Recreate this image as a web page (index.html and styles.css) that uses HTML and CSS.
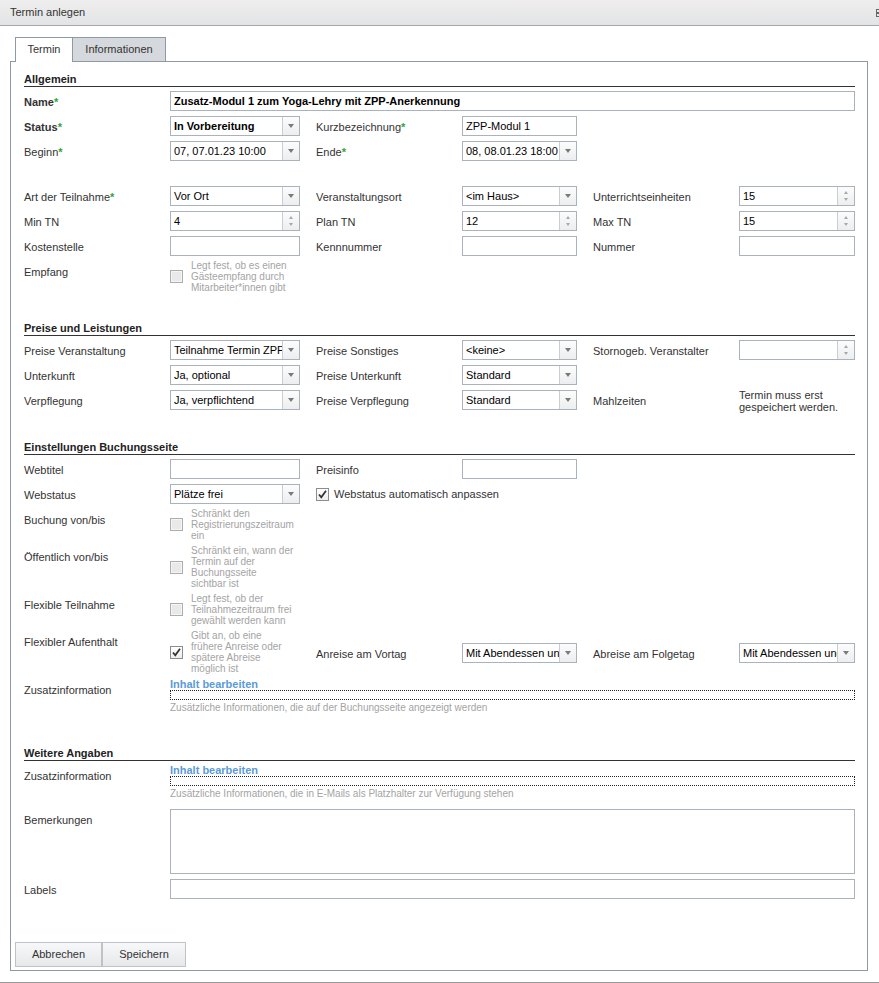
FILE: index.html
```html
<!DOCTYPE html>
<html lang="de">
<head>
<meta charset="utf-8">
<title>Termin anlegen</title>
<link rel="stylesheet" href="styles.css">
</head>
<body>
<div class="titlebar">
  <span class="title">Termin anlegen</span>
  <svg class="tb-icon" width="8" height="10" viewBox="0 0 8 10"><rect x="0.5" y="1.5" width="4" height="3" fill="none" stroke="#666"/><rect x="0.5" y="5.5" width="4" height="3" fill="none" stroke="#666"/></svg>
</div>

<div class="tabs">
  <div class="tab tab-active">Termin</div>
  <div class="tab tab-inactive">Informationen</div>
</div>

<div class="panel">
  <div class="content">

    <div class="section">
      <div class="section-head">Allgemein</div>
      <div class="grid">
        <div class="lbl bold">Name<span class="req">*</span></div>
        <div class="field span5"><span class="val bold">Zusatz-Modul 1 zum Yoga-Lehry mit ZPP-Anerkennung</span></div>

        <div class="lbl bold">Status<span class="req">*</span></div>
        <div class="field"><span class="val bold">In Vorbereitung</span><span class="trigger"><i class="arrow"></i></span></div>
        <div class="lbl lbl-pad">Kurzbezeichnung<span class="req">*</span></div>
        <div class="field"><span class="val">ZPP-Modul 1</span></div>
        <div></div><div></div>

        <div class="lbl">Beginn<span class="req">*</span></div>
        <div class="field"><span class="val">07, 07.01.23 10:00</span><span class="trigger"><i class="arrow"></i></span></div>
        <div class="lbl lbl-pad">Ende<span class="req">*</span></div>
        <div class="field"><span class="val">08, 08.01.23 18:00</span><span class="trigger"><i class="arrow"></i></span></div>
        <div></div><div></div>

        <div class="spacer"></div>

        <div class="lbl">Art der Teilnahme<span class="req">*</span></div>
        <div class="field"><span class="val">Vor Ort</span><span class="trigger"><i class="arrow"></i></span></div>
        <div class="lbl lbl-pad">Veranstaltungsort</div>
        <div class="field"><span class="val">&lt;im Haus&gt;</span><span class="trigger"><i class="arrow"></i></span></div>
        <div class="lbl lbl-pad">Unterrichtseinheiten</div>
        <div class="field"><span class="val">15</span><span class="spin"><i class="up"></i><i class="down"></i></span></div>

        <div class="lbl">Min TN</div>
        <div class="field"><span class="val">4</span><span class="spin"><i class="up"></i><i class="down"></i></span></div>
        <div class="lbl lbl-pad">Plan TN</div>
        <div class="field"><span class="val">12</span><span class="spin"><i class="up"></i><i class="down"></i></span></div>
        <div class="lbl lbl-pad">Max TN</div>
        <div class="field"><span class="val">15</span><span class="spin"><i class="up"></i><i class="down"></i></span></div>

        <div class="lbl">Kostenstelle</div>
        <div class="field"></div>
        <div class="lbl lbl-pad">Kennnummer</div>
        <div class="field"></div>
        <div class="lbl lbl-pad">Nummer</div>
        <div class="field"></div>

        <div class="lbl">Empfang</div>
        <div class="cbrow"><span class="cb cb-disabled"></span><span class="help">Legt fest, ob es einen<br>Gästeempfang durch<br>Mitarbeiter*innen gibt</span></div>
        <div></div><div></div><div></div><div></div>
      </div>
    </div>

    <div class="section s2">
      <div class="section-head">Preise und Leistungen</div>
      <div class="grid">
        <div class="lbl">Preise Veranstaltung</div>
        <div class="field"><span class="val">Teilnahme Termin ZPP</span><span class="trigger"><i class="arrow"></i></span></div>
        <div class="lbl lbl-pad">Preise Sonstiges</div>
        <div class="field"><span class="val">&lt;keine&gt;</span><span class="trigger"><i class="arrow"></i></span></div>
        <div class="lbl lbl-pad">Stornogeb. Veranstalter</div>
        <div class="field"><span class="val"></span><span class="spin"><i class="up"></i><i class="down"></i></span></div>

        <div class="lbl">Unterkunft</div>
        <div class="field"><span class="val">Ja, optional</span><span class="trigger"><i class="arrow"></i></span></div>
        <div class="lbl lbl-pad">Preise Unterkunft</div>
        <div class="field"><span class="val">Standard</span><span class="trigger"><i class="arrow"></i></span></div>
        <div></div><div></div>

        <div class="lbl">Verpflegung</div>
        <div class="field"><span class="val">Ja, verpflichtend</span><span class="trigger"><i class="arrow"></i></span></div>
        <div class="lbl lbl-pad">Preise Verpflegung</div>
        <div class="field"><span class="val">Standard</span><span class="trigger"><i class="arrow"></i></span></div>
        <div class="lbl lbl-pad">Mahlzeiten</div>
        <div class="note">Termin muss erst<br>gespeichert werden.</div>
      </div>
    </div>

    <div class="section s3">
      <div class="section-head">Einstellungen Buchungsseite</div>
      <div class="grid">
        <div class="lbl">Webtitel</div>
        <div class="field"></div>
        <div class="lbl lbl-pad">Preisinfo</div>
        <div class="field"></div>
        <div></div><div></div>

        <div class="lbl">Webstatus</div>
        <div class="field"><span class="val">Plätze frei</span><span class="trigger"><i class="arrow"></i></span></div>
        <div class="cbline span4"><span class="cb cb-checked"><svg width="11" height="11" viewBox="0 0 11 11"><path d="M2 5.5 L4.3 8.3 L9 1.8" fill="none" stroke="#333" stroke-width="1.8"/></svg></span><span>Webstatus automatisch anpassen</span></div>

        <div class="lbl">Buchung von/bis</div>
        <div class="cbrow"><span class="cb cb-disabled"></span><span class="help">Schränkt den<br>Registrierungszeitraum<br>ein</span></div>
        <div></div><div></div><div></div><div></div>

        <div class="lbl">Öffentlich von/bis</div>
        <div class="cbrow"><span class="cb cb-disabled"></span><span class="help">Schränkt ein, wann der<br>Termin auf der<br>Buchungsseite<br>sichtbar ist</span></div>
        <div></div><div></div><div></div><div></div>

        <div class="lbl">Flexible Teilnahme</div>
        <div class="cbrow"><span class="cb cb-disabled"></span><span class="help">Legt fest, ob der<br>Teilnahmezeitraum frei<br>gewählt werden kann</span></div>
        <div></div><div></div><div></div><div></div>

        <div class="lbl">Flexibler Aufenthalt</div>
        <div class="cbrow"><span class="cb cb-checked"><svg width="11" height="11" viewBox="0 0 11 11"><path d="M2 5.5 L4.3 8.3 L9 1.8" fill="none" stroke="#333" stroke-width="1.8"/></svg></span><span class="help">Gibt an, ob eine<br>frühere Anreise oder<br>spätere Abreise<br>möglich ist</span></div>
        <div class="lbl lbl-pad mid">Anreise am Vortag</div>
        <div class="field mid"><span class="val">Mit Abendessen und</span><span class="trigger"><i class="arrow"></i></span></div>
        <div class="lbl lbl-pad mid">Abreise am Folgetag</div>
        <div class="field mid"><span class="val">Mit Abendessen und</span><span class="trigger"><i class="arrow"></i></span></div>

        <div class="lbl">Zusatzinformation</div>
        <div class="zusatz span5">
          <div class="inhalt">Inhalt bearbeiten</div>
          <div class="dotted"></div>
          <div class="zhelp">Zusätzliche Informationen, die auf der Buchungsseite angezeigt werden</div>
        </div>
      </div>
    </div>

    <div class="section s4">
      <div class="section-head">Weitere Angaben</div>
      <div class="grid">
        <div class="lbl">Zusatzinformation</div>
        <div class="zusatz span5">
          <div class="inhalt">Inhalt bearbeiten</div>
          <div class="dotted"></div>
          <div class="zhelp">Zusätzliche Informationen, die in E-Mails als Platzhalter zur Verfügung stehen</div>
        </div>

        <div class="lbl">Bemerkungen</div>
        <div class="field textarea span5"></div>

        <div class="lbl">Labels</div>
        <div class="field span5"></div>
      </div>
    </div>

  </div>

  <div class="btnbar">
    <div class="btn btn-cancel">Abbrechen</div>
    <div class="btn btn-save">Speichern</div>
  </div>
</div>

<div class="footer"></div>
</body>
</html>
```

FILE: styles.css
```css
html, body {
  margin: 0;
  padding: 0;
}

body {
  width: 879px;
  height: 983px;
  overflow: hidden;
  background: #fff;
  color: #333;
  font-family: "Liberation Sans", Arial, sans-serif;
  font-size: 11px;
}

/* title bar */
.titlebar {
  height: 25px;
  border-bottom: 1px solid #a4a7ab;
  background: linear-gradient(#eeeeee, #e3e4e5);
  display: flex;
  align-items: center;
  padding-left: 10px;
  overflow: hidden;
}
.title {
  color: #333;
  line-height: 25px;
}
.tb-icon {
  margin-left: auto;
  margin-right: -5px;
  flex: none;
}

/* tabs */
.tabs {
  display: flex;
  align-items: flex-start;
  margin: 11px 0 0 15px;
  height: 24px;
}
.tab {
  box-sizing: border-box;
  height: 24px;
  border: 1px solid #8d99a6;
  border-bottom: none;
  line-height: 23px;
  text-align: center;
  color: #333;
}
.tab-active {
  width: 58px;
  height: 25px;
  background: #fff;
  margin-bottom: -1px;
  position: relative;
  z-index: 1;
}
.tab-inactive {
  width: 93px;
  border-left: none;
  background: #d5d8dc;
}

/* panel */
.panel {
  margin: 0 11px 0 10px;
  border: 1px solid #8d99a6;
  padding: 11px 0 3px 0;
}
.content {
  padding: 0 12px 0 13px;
}

.section-head {
  font-weight: bold;
  color: #222;
  line-height: 13px;
  border-bottom: 1px solid #333;
  margin-bottom: 4px;
}
.s2 { margin-top: 29px; }
.s3 { margin-top: 28px; }
.s4 { margin-top: 29px; }

.grid {
  display: grid;
  grid-template-columns: 146px 130px 162px 115px 162px 116px;
  row-gap: 5px;
  align-items: start;
}
.span5 { grid-column: span 5; }
.span4 { grid-column: span 4; }
.spacer {
  grid-column: 1 / -1;
  height: 15px;
}
.mid { align-self: center; }

.lbl {
  line-height: 22px;
  margin-bottom: -2px;
  white-space: nowrap;
  color: #333;
}
.lbl-pad { padding-left: 16px; }
.bold { font-weight: bold; }
.req {
  color: #2fa52f;
  font-weight: bold;
}

/* fields */
.field {
  box-sizing: border-box;
  height: 20px;
  border: 1px solid #aab2bb;
  background: #fff;
  display: flex;
  overflow: hidden;
}
.val {
  flex: 1;
  min-width: 0;
  padding: 0 3px;
  line-height: 18px;
  color: #000;
  white-space: nowrap;
  overflow: hidden;
}
.trigger,
.spin {
  flex: none;
  width: 16px;
  border-left: 1px solid #c9ced4;
  background: linear-gradient(#fcfcfc, #eceeef);
  display: flex;
  align-items: center;
  justify-content: center;
}
.arrow {
  width: 0;
  height: 0;
  border-left: 3.5px solid transparent;
  border-right: 3.5px solid transparent;
  border-top: 4px solid #7a7a7a;
}
.spin {
  flex-direction: column;
  gap: 4px;
}
.spin .up {
  width: 0;
  height: 0;
  border-left: 2.5px solid transparent;
  border-right: 2.5px solid transparent;
  border-bottom: 3px solid #a8a8a8;
}
.spin .down {
  width: 0;
  height: 0;
  border-left: 2.5px solid transparent;
  border-right: 2.5px solid transparent;
  border-top: 3px solid #a8a8a8;
}
.textarea {
  height: 65px;
}

/* checkboxes */
.cbrow {
  display: flex;
  align-items: center;
  gap: 8px;
  margin-top: -1px;
  white-space: nowrap;
}
.cb {
  flex: none;
  box-sizing: border-box;
  width: 13px;
  height: 13px;
  display: flex;
  align-items: center;
  justify-content: center;
}
.cb-disabled {
  border: 1px solid #adadad;
  background: #e9e9e9;
  box-shadow: inset 0 0 0 1px #f5f5f5;
}
.cb-checked {
  border: 1px solid #8c8c8c;
  background: linear-gradient(#ffffff, #ededed);
}
.help {
  font-size: 10px;
  line-height: 11px;
  color: #a4a4a4;
}
.cbline {
  display: flex;
  align-items: center;
  gap: 5px;
  padding-left: 16px;
  line-height: 20px;
  color: #333;
}

.note {
  line-height: 12px;
  margin-top: -1px;
  color: #333;
}

/* zusatz */
.inhalt {
  color: #5a9bd8;
  font-weight: bold;
  line-height: 11px;
}
.dotted {
  box-sizing: border-box;
  height: 10px;
  border: 1px dotted #222;
}
.zhelp {
  margin-top: 2px;
  padding-bottom: 5px;
  font-size: 10px;
  line-height: 11px;
  color: #a4a4a4;
  white-space: nowrap;
}

/* buttons */
.btnbar {
  display: flex;
  padding-left: 4px;
  margin-top: 43px;
}
.btn {
  box-sizing: border-box;
  height: 25px;
  border: 1px solid #bdc3c9;
  background: linear-gradient(#f7f8f9, #e6e8ea);
  line-height: 23px;
  text-align: center;
  color: #333;
}
.btn-cancel { width: 87px; }
.btn-save { width: 84px; }

.footer {
  margin-top: 11px;
  border-top: 1px solid #9a9a9a;
}
```
